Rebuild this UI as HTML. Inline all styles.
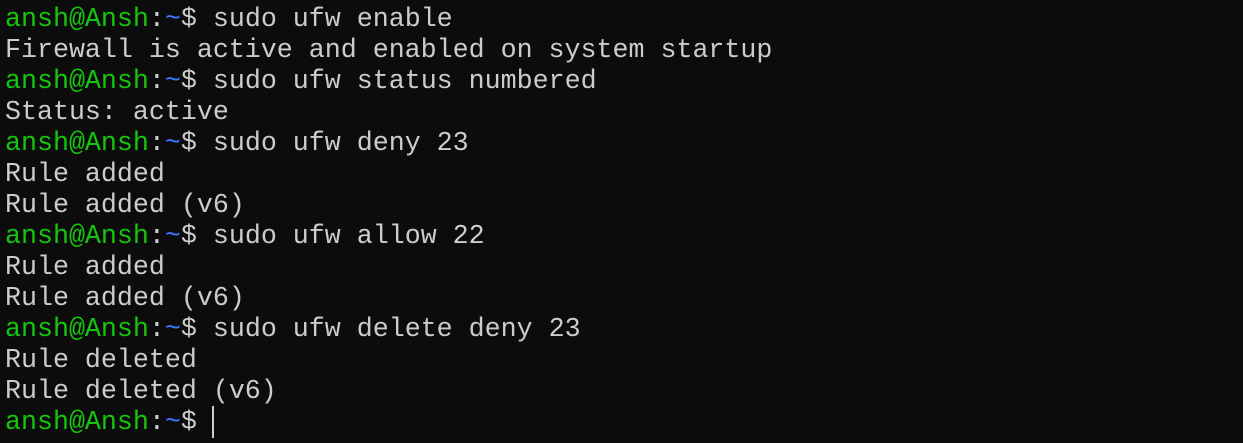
<!DOCTYPE html><html><head><style>
html,body{margin:0;background:#0c0c0c;width:1243px;height:443px;overflow:hidden}
pre{margin:0;position:absolute;left:5px;top:5px;font-family:"Liberation Mono",monospace;font-size:26.65px;line-height:31px;color:#cccccc}
.g{color:#16c60c}.b{color:#3b78ff}
.cur{position:absolute;left:212px;top:406px;width:2px;height:32px;background:#cccccc}
</style></head><body><pre><span class="g">ansh@Ansh</span>:<span class="b">~</span>$ sudo ufw enable
Firewall is active and enabled on system startup
<span class="g">ansh@Ansh</span>:<span class="b">~</span>$ sudo ufw status numbered
Status: active
<span class="g">ansh@Ansh</span>:<span class="b">~</span>$ sudo ufw deny 23
Rule added
Rule added (v6)
<span class="g">ansh@Ansh</span>:<span class="b">~</span>$ sudo ufw allow 22
Rule added
Rule added (v6)
<span class="g">ansh@Ansh</span>:<span class="b">~</span>$ sudo ufw delete deny 23
Rule deleted
Rule deleted (v6)
<span class="g">ansh@Ansh</span>:<span class="b">~</span>$ </pre><div class="cur"></div></body></html>
